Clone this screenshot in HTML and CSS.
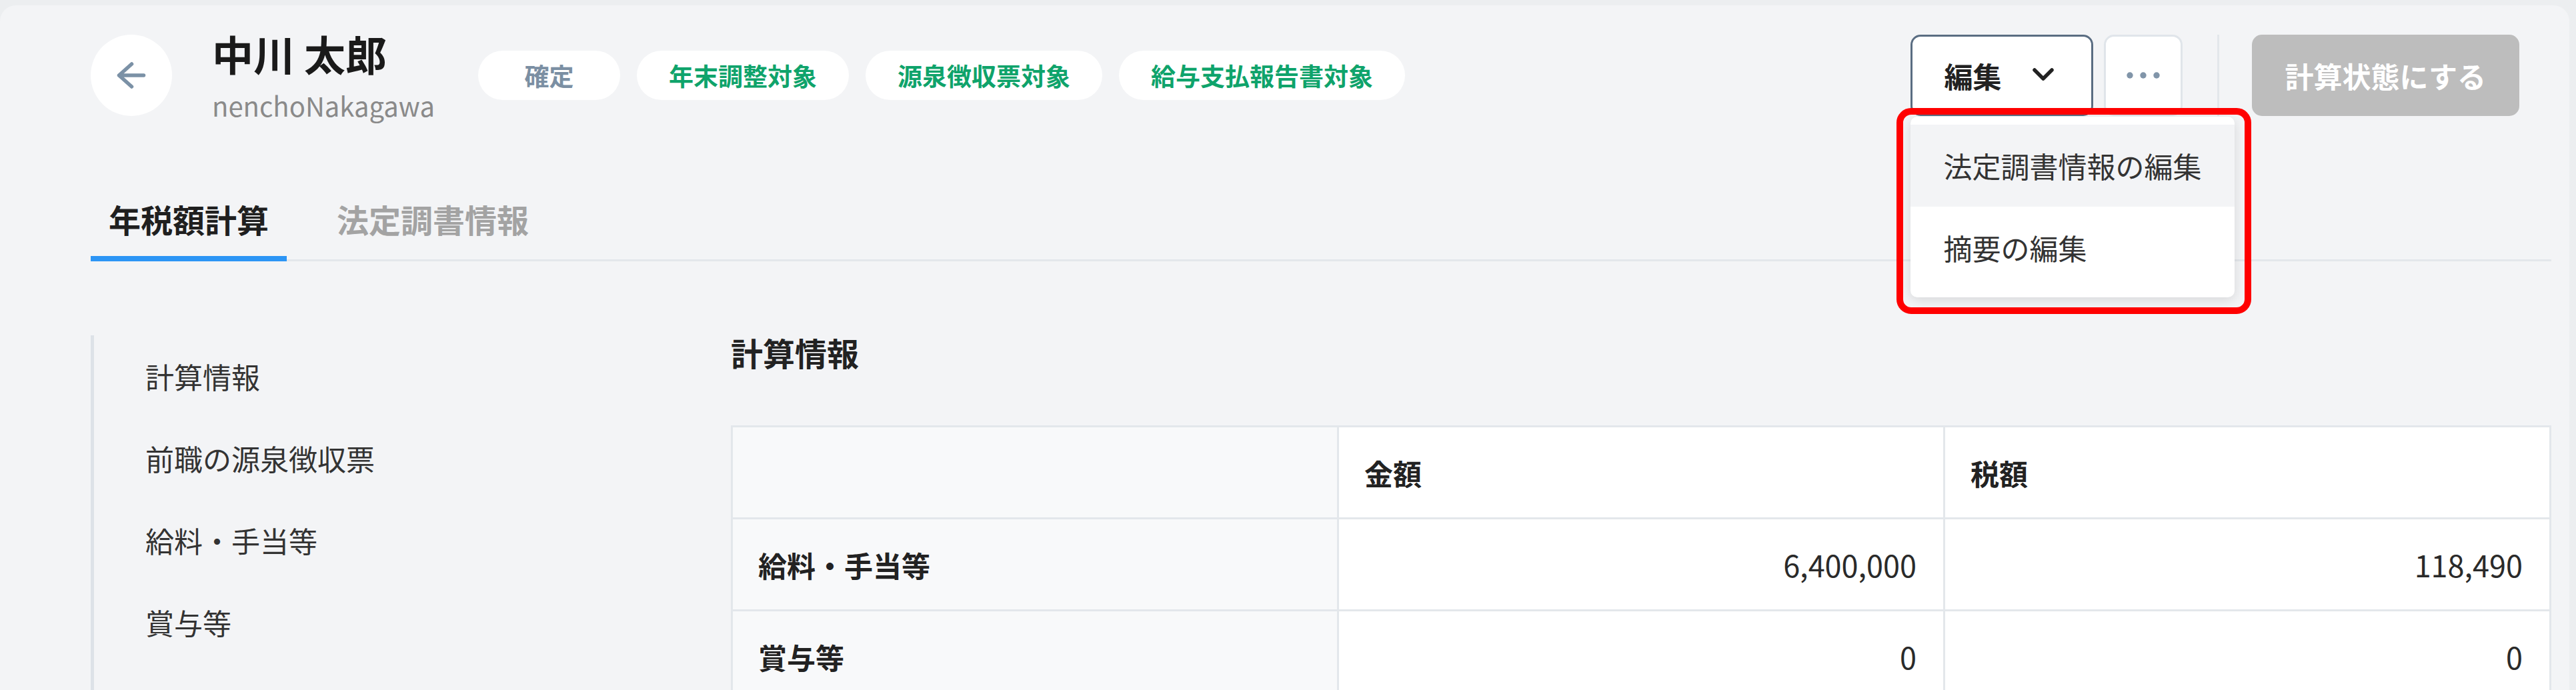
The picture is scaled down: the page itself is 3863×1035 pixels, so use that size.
FILE: index.html
```html
<!DOCTYPE html>
<html lang="ja">
<head>
<meta charset="utf-8">
<title>中川 太郎</title>
<link rel="stylesheet" href="styles.css">
</head>
<body>
<div class="card">
  <header class="header">
    <div class="back">
      <svg width="48" height="48" viewBox="0 0 48 48" fill="none" stroke="#7b91a6" stroke-width="5.5" stroke-linecap="round" stroke-linejoin="round"><path d="M42.5 24H5.5M24.5 7L5.5 24L24.5 41"/></svg>
    </div>
    <div class="who">
      <div class="name">中川 太郎</div>
      <div class="user">nenchoNakagawa</div>
    </div>
    <div class="tags">
      <span class="tag tag-gray">確定</span>
      <span class="tag">年末調整対象</span>
      <span class="tag">源泉徴収票対象</span>
      <span class="tag">給与支払報告書対象</span>
    </div>
    <div class="actions">
      <div class="edit-wrap">
        <button class="btn btn-edit">編集
          <svg width="40" height="40" viewBox="0 0 40 40" fill="none" stroke="#222" stroke-width="5.5" stroke-linecap="round" stroke-linejoin="round"><path d="M7 12L20 25L33 12"/></svg>
        </button>
        <div class="menu">
          <div class="menu-item hover">法定調書情報の編集</div>
          <div class="menu-item">摘要の編集</div>
        </div>
        <div class="highlight"></div>
      </div>
      <button class="btn btn-more">
        <svg width="50" height="12" viewBox="0 0 50 12" fill="#8195a9"><circle cx="5" cy="6" r="4.7"/><circle cx="25" cy="6" r="4.7"/><circle cx="45" cy="6" r="4.7"/></svg>
      </button>
      <span class="divider"></span>
      <button class="btn btn-primary">計算状態にする</button>
    </div>
  </header>

  <nav class="tabs">
    <div class="tab active">年税額計算</div>
    <div class="tab">法定調書情報</div>
  </nav>

  <div class="body">
    <ul class="side">
      <li>計算情報</li>
      <li>前職の源泉徴収票</li>
      <li>給料・手当等</li>
      <li>賞与等</li>
    </ul>
    <main class="main">
      <h2 class="heading">計算情報</h2>
      <table class="calc">
        <thead>
          <tr><th class="label"></th><th>金額</th><th>税額</th></tr>
        </thead>
        <tbody>
          <tr><td class="label">給料・手当等</td><td class="num">6,400,000</td><td class="num">118,490</td></tr>
          <tr><td class="label">賞与等</td><td class="num">0</td><td class="num">0</td></tr>
        </tbody>
      </table>
    </main>
  </div>
</div>
</body>
</html>
```

FILE: styles.css
```css
html, body {
  margin: 0;
  padding: 0;
}
body {
  background: #eceef0;
  font-family: "Noto Sans CJK JP", "Noto Sans", sans-serif;
  height: 1035px;
  overflow: hidden;
  color: #222;
}
.card {
  margin: 8px 10px 0 0;
  background: #f3f4f6;
  border-radius: 24px 24px 0 0;
  padding: 44px 27px 0 136px;
  min-height: 1200px;
  box-sizing: border-box;
}

/* header */
.header {
  display: flex;
  align-items: center;
  height: 122px;
  margin-right: 48px;
}
.back {
  width: 122px;
  height: 122px;
  border-radius: 50%;
  background: #fff;
  display: flex;
  align-items: center;
  justify-content: center;
  margin-right: 60px;
  flex: none;
}
.who {
  margin-right: 65px;
}
.name {
  font-size: 62px;
  font-weight: 700;
  line-height: 80px;
  color: #1a1a1a;
}
.user {
  font-size: 40px;
  line-height: 56px;
  margin-top: 10px;
  color: #8a8a8a;
}
.tags {
  display: flex;
  gap: 25px;
}
.tag {
  height: 74px;
  line-height: 74px;
  border-radius: 37px;
  background: #fff;
  padding: 0 48px;
  font-size: 37px;
  font-weight: 700;
  color: #0fa36b;
  text-align: center;
}
.tag-gray {
  min-width: 213px;
  padding: 0;
  color: #7b8fa3;
}
.actions {
  margin-left: auto;
  display: flex;
  align-items: center;
}
.edit-wrap {
  position: relative;
}
.btn {
  height: 122px;
  box-sizing: border-box;
  font-family: inherit;
  font-size: 43px;
  font-weight: 700;
  border-radius: 15px;
  background: #fff;
  display: flex;
  align-items: center;
  cursor: pointer;
}
.btn-edit {
  border: 3px solid #5a6d82;
  padding: 0 52px 0 48px;
  gap: 42px;
  color: #222;
}
.btn-more {
  margin-left: 16px;
  width: 118px;
  border: 3px solid #e0e5ea;
  justify-content: center;
  padding: 0;
}
.divider {
  width: 3px;
  height: 122px;
  background: #e3e7eb;
  margin: 0 49px 0 52px;
}
.btn-primary {
  border: none;
  background: #bdbdbd;
  color: #fff;
  padding: 0 50px;
}

/* dropdown */
.menu {
  position: absolute;
  top: calc(100% + 1px);
  left: 0;
  width: 486px;
  background: #fff;
  border-radius: 10px;
  box-shadow: 0 4px 18px rgba(0, 0, 0, 0.12);
  padding: 12px 0 13px;
  z-index: 5;
}
.menu-item {
  font-size: 43px;
  line-height: 123px;
  padding-left: 50px;
  color: #333;
}
.menu-item.hover {
  background: #f3f4f6;
}
.highlight {
  position: absolute;
  left: -21px;
  top: 110px;
  width: 532px;
  height: 309px;
  box-sizing: border-box;
  border: 10px solid #ff0000;
  border-radius: 22px;
  z-index: 6;
  pointer-events: none;
}

/* tabs */
.tabs {
  display: flex;
  gap: 48px;
  margin-top: 122px;
  border-bottom: 3px solid #e3e7eb;
}
.tab {
  font-size: 48px;
  font-weight: 700;
  line-height: 64px;
  padding: 0 27px 24px;
  border-bottom: 8px solid transparent;
  margin-bottom: -3px;
  color: #a3a3a3;
}
.tab.active {
  color: #1f1f1f;
  border-bottom-color: #2c95f5;
}

/* body */
.body {
  display: grid;
  grid-template-columns: 960px 1fr;
  margin-top: 111px;
}
.side {
  list-style: none;
  margin: 0;
  padding: 0;
  border-left: 5px solid #dde2e8;
}
.side li {
  font-size: 43px;
  line-height: 123px;
  padding-left: 77px;
  color: #333;
}
.heading {
  margin: 0 0 85px;
  font-size: 48px;
  line-height: 50px;
  font-weight: 700;
  color: #222;
}
.calc {
  width: 100%;
  table-layout: fixed;
  border-collapse: separate;
  border-spacing: 0;
  border-top: 3px solid #e3e7eb;
  border-left: 3px solid #e3e7eb;
}
.calc th,
.calc td {
  height: 135px;
  padding: 0 40px 0 38px;
  border-right: 3px solid #e3e7eb;
  border-bottom: 3px solid #e3e7eb;
  background: #fff;
  font-size: 43px;
  text-align: left;
  vertical-align: middle;
  color: #222;
}
.calc th {
  font-weight: 700;
}
.calc .label {
  background: #f8f9fa;
  font-weight: 700;
}
.calc .num {
  text-align: right;
  font-weight: 400;
  font-size: 45px;
  color: #2a2a2a;
}
```
